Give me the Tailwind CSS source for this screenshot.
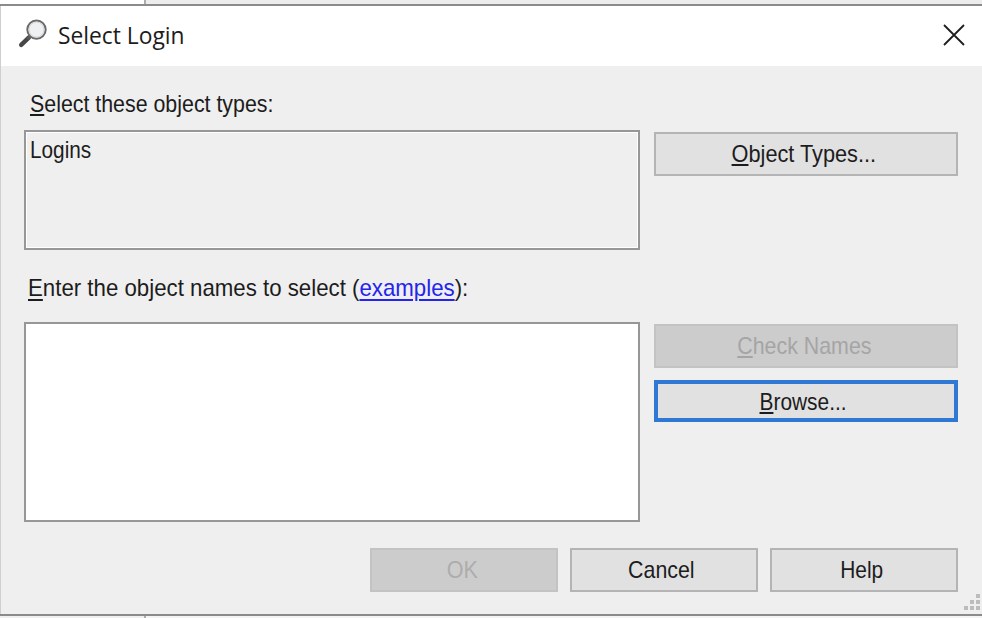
<!DOCTYPE html>
<html lang="en">
<head>
<meta charset="utf-8">
<title>Select Login</title>
<script src="https://cdn.jsdelivr.net/npm/@tailwindcss/browser@4"></script>
</head>
<body class="w-[982px] h-[618px] overflow-hidden bg-white flex flex-col font-['Liberation_Sans',Arial,sans-serif] text-[24px] leading-[24px] text-[#1c1c20]">
  <!-- window behind the dialog, upper edge -->
  <div class="h-[4px] flex shrink-0">
    <div class="w-[146px] border-r-2 border-[#adadad] bg-white"></div>
    <div class="flex-1 bg-[#ededed]"></div>
  </div>
  <main class="relative h-[612px] shrink-0 flex flex-col border-y-2 border-[#8b8b8b] bg-[#efefef]">
    <header class="h-[60px] shrink-0 bg-white flex items-center border-l border-l-[#cfcfcf]">
      <svg class="ml-[15px] w-[36px] h-[36px] shrink-0" viewBox="0 0 36 36" fill="none">
        <path d="M13 19.3 5.2 26.9" stroke="#474747" stroke-width="4.4" stroke-linecap="round"/>
        <path d="M14.5 18 11.5 21" stroke="#5a5a5a" stroke-width="2.5"/>
        <circle cx="20.5" cy="11.6" r="9.2" fill="#eef0f2" stroke="#6a6a6a" stroke-width="2"/>
        <circle cx="20.5" cy="11.6" r="7.5" stroke="#d2d4d6" stroke-width="1"/>
      </svg>
      <h1 class="ml-[6px] mb-[2px] font-['Open_Sans','Noto_Sans',sans-serif] text-[24px] whitespace-nowrap origin-left scale-x-[0.95]">Select Login</h1>
      <svg class="ml-auto mr-[17px] mb-[3px] w-[22px] h-[22px]" viewBox="0 0 22 22" fill="none" stroke="#1e1e1e" stroke-width="1.8"><path d="M1 1 21 21M21 1 1 21"/></svg>
    </header>
    <section class="flex-1 border-l border-l-[#cfcfcf] pl-[23px] pr-[24px] pt-[26px]">
      <div class="pl-[6px] h-[38px]"><span class="inline-block whitespace-nowrap origin-left scale-x-[0.89]"><span class="underline decoration-2 underline-offset-[2px]">S</span>elect these object types:</span></div>
      <div class="flex gap-[14px]">
        <div class="w-[616px] h-[120px] border-2 border-[#979797] outline-1 -outline-offset-[3px] outline-white pl-[4px] pt-[6px]"><span class="inline-block origin-left scale-x-[0.865]">Logins</span></div>
        <button class="mt-[2px] w-[304px] h-[44px] border-2 border-[#b4b4b4] bg-[#e1e1e1] flex items-center justify-center pr-[5px]"><span class="whitespace-nowrap scale-x-[0.905]"><span class="underline decoration-2 underline-offset-[2px]">O</span>bject Types...</span></button>
      </div>
      <div class="pl-[4px] pt-[26px] h-[72px]"><span class="inline-block whitespace-nowrap origin-left scale-x-[0.927]"><span class="underline decoration-2 underline-offset-[3px]">E</span>nter the object names to select (<a class="text-[#2424ee] underline decoration-2 underline-offset-[3px]">examples</a>):</span></div>
      <div class="flex gap-[14px]">
        <div class="w-[616px] h-[200px] border-2 border-[#979797] bg-white"></div>
        <div class="flex flex-col gap-[12px] pt-[2px]">
          <button class="w-[304px] h-[44px] border-2 border-[#c3c3c3] bg-[#cccccc] text-[#a5a5a5] flex items-center justify-center pr-[4px]"><span class="whitespace-nowrap scale-x-[0.89]"><span class="underline decoration-2 underline-offset-[2px]">C</span>heck Names</span></button>
          <button class="w-[304px] h-[42px] border-4 border-[#2f78d4] bg-[#e1e1e1] flex items-center justify-center pr-[5px] pt-[2px]"><span class="whitespace-nowrap scale-x-[0.87]"><span class="underline decoration-2 underline-offset-[2px]">B</span>rowse...</span></button>
        </div>
      </div>
      <footer class="mt-[26px] flex justify-end gap-[12px]">
        <button class="w-[188px] h-[44px] border-2 border-[#c3c3c3] bg-[#cccccc] text-[#adadad] flex items-center justify-center pr-[4px]"><span class="scale-x-[0.9]">OK</span></button>
        <button class="w-[188px] h-[44px] border-2 border-[#b4b4b4] bg-[#e1e1e1] flex items-center justify-center pr-[5px]"><span class="scale-x-[0.89]">Cancel</span></button>
        <button class="w-[188px] h-[44px] border-2 border-[#b4b4b4] bg-[#e1e1e1] flex items-center justify-center pr-[5px]"><span class="scale-x-[0.87]">Help</span></button>
      </footer>
    </section>
    <!-- resize grip -->
    <svg class="absolute right-0 bottom-[3px] w-[20px] h-[20px]" viewBox="0 0 20 20" fill="#bcbcbc">
      <path d="M14 3h4v4h-4zM14 9h4v4h-4zM8 9h4v4H8zM2 15h4v4H2zM8 15h4v4H8zM14 15h4v4h-4z"/>
    </svg>
  </main>
  <!-- window behind the dialog, lower edge -->
  <div class="h-[2px] flex shrink-0">
    <div class="w-[146px] border-r-2 border-[#adadad] bg-[#f0f0f0]"></div>
    <div class="flex-1 bg-[#f4f4f4]"></div>
  </div>
</body>
</html>
